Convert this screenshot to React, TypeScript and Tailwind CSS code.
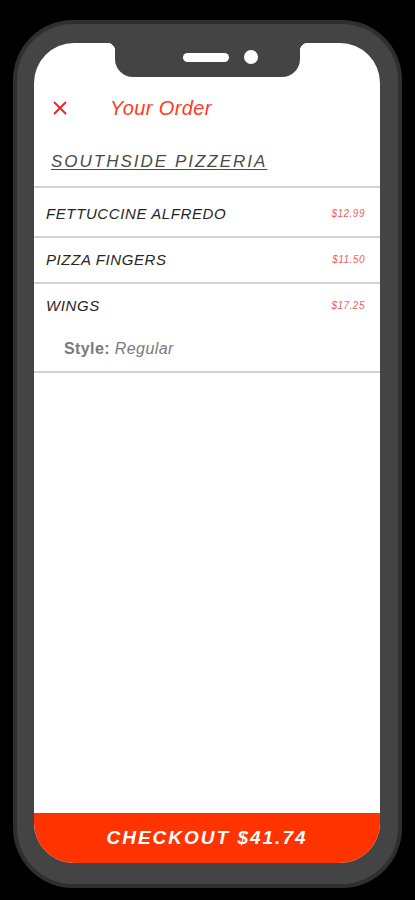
import React from 'react';

type OrderItem = {
  name: string;
  price: string;
  style?: string;
};

const items: OrderItem[] = [
  { name: 'FETTUCCINE ALFREDO', price: '$12.99' },
  { name: 'PIZZA FINGERS', price: '$11.50' },
  { name: 'WINGS', price: '$17.25', style: 'Regular' },
];

const CloseIcon: React.FC = () => (
  <svg width="16" height="16" viewBox="0 0 16 16" fill="none">
    <path d="M2.5 2.5L13.5 13.5M13.5 2.5L2.5 13.5" stroke="#e8231f" strokeWidth="1.8" strokeLinecap="round" />
  </svg>
);

const App: React.FC = () => {
  return (
    <div
      className="w-[415px] h-[900px] bg-black pt-[20px] px-[13px]"
      style={{ fontFamily: '"Liberation Sans", Arial, sans-serif' }}
    >
      {/* phone body */}
      <div className="h-[868px] w-[389px] rounded-[60px] bg-[#2f2f2f] p-[4px]">
        <div className="h-full w-full rounded-[56px] bg-[#444444] pt-[19px] pb-[21px] pl-[17px] pr-[18px]">
          {/* screen */}
          <div className="relative flex h-full flex-col overflow-hidden rounded-[40px] bg-white">
            {/* notch */}
            <div className="absolute left-[81px] top-0 h-[34px] w-[185px] rounded-b-[18px] bg-[#444444]">
              <div className="absolute left-[-8px] top-0 h-[8px] w-[8px] bg-[radial-gradient(circle_at_0_100%,transparent_8px,#444444_8.5px)]" />
              <div className="absolute right-[-8px] top-0 h-[8px] w-[8px] bg-[radial-gradient(circle_at_100%_100%,transparent_8px,#444444_8.5px)]" />
              <div className="absolute left-[68px] top-[10px] h-[9px] w-[46px] rounded-full bg-white" />
              <div className="absolute left-[129px] top-[7px] h-[14px] w-[14px] rounded-full bg-white" />
            </div>

            {/* header */}
            <div className="flex items-center pt-[55px] pl-[18px]">
              <CloseIcon />
              <span className="ml-[42px] text-[20px] leading-[20px] italic text-[#ff3b1f] tracking-[0.4px]">
                Your Order
              </span>
            </div>
            <div className="pt-[32px] pb-[12px] pl-[17px]">
              <span className="text-[17px] leading-[20px] italic text-[#4a4a4a] tracking-[2px] underline decoration-1 underline-offset-2">
                SOUTHSIDE PIZZERIA
              </span>
            </div>

            {/* items */}
            <div className="border-t-2 border-[#d2d2d2]">
              {items.map((item, i) => (
                <div
                  key={item.name}
                  className={`border-b-2 border-[#d2d2d2] pl-[12px] pr-[15px] pb-[13px] ${i === 0 ? 'pt-[17px]' : 'pt-[13px]'}`}
                >
                  <div className="flex items-center justify-between">
                    <span className="text-[15px] leading-[18px] italic text-[#262626] tracking-[0.6px]">
                      {item.name}
                    </span>
                    <span className="text-[10px] leading-[18px] italic text-[#f06060] tracking-[0.5px]">
                      {item.price}
                    </span>
                  </div>
                  {item.style && (
                    <div className="mt-[25px] pl-[18px] text-[16px] leading-[18px] text-[#7a7a7a] tracking-[0.4px]">
                      <span className="font-bold">Style:</span> <span className="italic">{item.style}</span>
                    </div>
                  )}
                </div>
              ))}
            </div>

            <div className="flex-1" />

            {/* checkout */}
            <div className="flex h-[50px] items-center justify-center bg-[#ff3300]">
              <span className="text-[19px] font-bold italic text-white tracking-[2px]">CHECKOUT $41.74</span>
            </div>
          </div>
        </div>
      </div>
    </div>
  );
};

export default App;
